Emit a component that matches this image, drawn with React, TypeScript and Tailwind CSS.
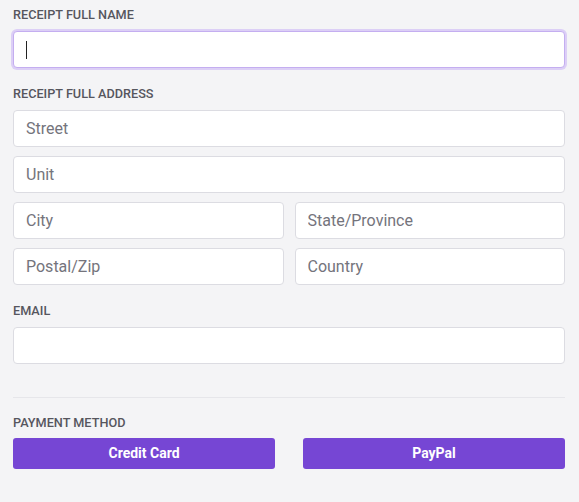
import React from "react";

const font = { fontFamily: "Roboto, 'Noto Sans', sans-serif" };

function Label({ children, mb = "mb-2" }: { children: React.ReactNode; mb?: string }) {
  return (
    <div className={"text-[12.7px] leading-[16px] font-medium uppercase text-[#56565e] " + mb}>
      {children}
    </div>
  );
}

function Field({ placeholder }: { placeholder?: string }) {
  return (
    <input
      placeholder={placeholder}
      className="block w-full h-[37px] rounded-[4px] border border-[#dcdce2] bg-white px-[12px] text-[16px] text-[#333] placeholder:text-[#74747c] outline-none"
    />
  );
}

export default function App() {
  return (
    <div style={font} className="min-h-[502px] bg-[#f4f4f6] pl-[13px] pr-[14px] pt-[7px]">
      <Label>Receipt Full Name</Label>
      <div className="relative h-[37px] rounded-[4px] border border-[#c4aef0] bg-white ring-2 ring-[#dccff6]">
        <span className="absolute left-[12px] top-[9px] h-[18px] w-px bg-[#222]" />
      </div>

      <div className="mt-[18px]">
        <Label>Receipt Full Address</Label>
        <div className="flex flex-col gap-[9px]">
          <Field placeholder="Street" />
          <Field placeholder="Unit" />
          <div className="grid grid-cols-2 gap-[11px]">
            <Field placeholder="City" />
            <Field placeholder="State/Province" />
          </div>
          <div className="grid grid-cols-2 gap-[11px]">
            <Field placeholder="Postal/Zip" />
            <Field placeholder="Country" />
          </div>
        </div>
      </div>

      <div className="mt-[18px]">
        <Label>Email</Label>
        <Field />
      </div>

      <div className="mt-[33px] h-px bg-[#e6e6ea]" />

      <div className="mt-[17px]">
        <Label mb="mb-[7px]">Payment Method</Label>
        <div className="grid grid-cols-2 gap-[28px]">
          <button className="h-[31px] rounded-[3px] bg-[#7646d4] text-white text-[14px] font-bold">
            Credit Card
          </button>
          <button className="h-[31px] rounded-[3px] bg-[#7646d4] text-white text-[14px] font-bold">
            PayPal
          </button>
        </div>
      </div>
    </div>
  );
}
